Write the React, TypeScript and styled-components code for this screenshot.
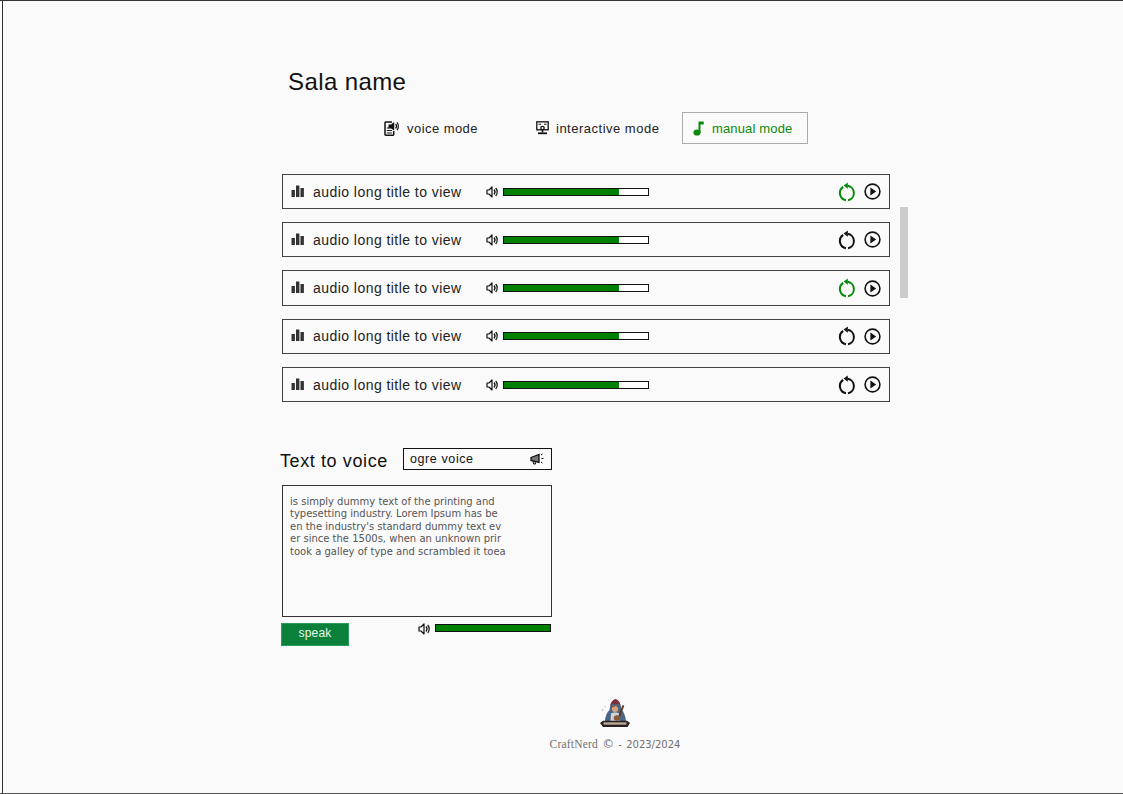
import React from "react";
import styled, { createGlobalStyle } from "styled-components";

const Global = createGlobalStyle`
  html, body { margin: 0; padding: 0; background: #fafafa; }
  * { box-sizing: border-box; }
`;
const deco = `"Liberation Sans", sans-serif`;

const Page = styled.div`
  width: 1123px; height: 794px; overflow: hidden; position: relative;
  background: #fafafa;
  border-top: 1px solid #333; border-bottom: 1px solid #555;
  padding-left: 3px;
  &::before { content: ""; position: absolute; left: 2px; top: 0; bottom: 0; width: 1px; background: #333; }
`;
const Main = styled.main`
  width: 608px; margin-left: 279px; padding-top: 64px;
`;
const Title = styled.h1`
  margin: 0 0 0 6px; height: 32px; font: 400 24px/34px ${deco}; letter-spacing: 0.4px; color: #111;
`;
const Tabs = styled.nav`
  display: flex; margin: 15px 0 0 91px; height: 32px;
`;
const Tab = styled.div<{ $w: number; $ls: number; $active?: boolean }>`
  width: ${p => p.$w}px; display: flex; align-items: center; padding-left: 10px;
  color: ${p => p.$active ? "#0a8a0a" : "#222"};
  border: 1px solid ${p => p.$active ? "#aaa" : "transparent"};
  font: 400 13px ${deco}; letter-spacing: ${p => p.$ls}px; white-space: nowrap;
`;
const TabIcon = styled.span<{ $w: number }>`
  width: ${p => p.$w}px; flex: none; display: flex; align-items: center;
`;
const List = styled.section`
  margin-top: 29.9px; display: flex; flex-direction: column; gap: 12.9px;
`;
const Row = styled.div`
  height: 35.35px; border: 1px solid #444; display: flex; align-items: center; padding: 0 8px;
`;
const RowTitle = styled.span`
  width: 173px; margin-left: 8px; font: 400 14px ${deco}; letter-spacing: 0.45px; color: #222; white-space: nowrap;
`;
const Bar = styled.div<{ $w: number }>`
  width: ${p => p.$w}px; height: 8px; margin-left: 5px; background: #fff; border: 1px solid #111; overflow: hidden;
`;
const Fill = styled.div`
  height: 100%; background: #008000;
`;
const Controls = styled.div`
  margin-left: auto; display: flex; align-items: center; gap: 8px;
`;
const Scroll = styled.div`
  position: absolute; left: 900px; top: 206px; width: 8px; height: 91px; background: #ccc;
`;
const Tts = styled.section`
  width: 270px; margin-top: 45.8px;
`;
const TtsHead = styled.div`
  display: flex; align-items: center; height: 23px; margin-left: -2px; gap: 16px;
`;
const TtsTitle = styled.h2`
  margin: 4px 0 0; width: 107px; font: 400 18px ${deco}; letter-spacing: 0.6px; color: #111; white-space: nowrap;
`;
const Select = styled.div`
  flex: none; width: 149px; height: 22px; border: 1px solid #111; display: flex; align-items: center; justify-content: space-between;
  padding: 0 6px; font: 400 12.5px ${deco}; letter-spacing: 0.6px; color: #111; background: #fafafa;
`;
const TextBox = styled.div`
  margin-top: 14px; height: 132px; border: 1px solid #333; padding: 10px 7px; font: 10px/12.4px "DejaVu Sans", sans-serif; color: #555;
`;
const Line = styled.div``;
const TtsFoot = styled.div`
  display: flex; justify-content: space-between; margin: 6px 0 0 -1px; width: 270px;
`;
const Speak = styled.button`
  width: 68px; height: 23px; border: 1px solid #2b9a5a; background: #0a803a; color: #e8f5ec; font: 400 12px ${deco}; letter-spacing: 0.2px; padding: 0 0 2px;
`;
const VolWrap = styled.div`
  display: flex; align-items: flex-start;
`;
const FootBar = styled(Bar)`
  margin: 1px 0 0 5px;
`;
const Footer = styled.footer`
  display: flex; flex-direction: column; align-items: center; margin: 52px 0 0; padding-left: 104px;
`;
const Copy = styled.div`
  margin-top: 8px; color: #707070; font: 10px "DejaVu Sans", sans-serif; white-space: nowrap; word-spacing: 1px;
`;
const Brand = styled.span`
  font: 11.5px "Liberation Serif", serif; letter-spacing: 0.2px;
`;
const Sym = styled.span`
  font-size: 12px;
`;

const Bars = () => <svg width="14" height="14" viewBox="0 0 14 14" fill="#333"><rect x="0.5" y="5" width="3.4" height="7"/><rect x="5" y="0.5" width="3.4" height="11.5"/><rect x="9.5" y="3" width="3.4" height="9"/></svg>;
const Vol = () => <svg width="12" height="12" viewBox="0 0 12 12" fill="none"><path d="M1 4h2l3-3v10L3 8H1z" fill="#fafafa" stroke="#111" strokeWidth="1.2" strokeLinejoin="round"/><path d="M8 3.5c1.2 1.4 1.2 3.6 0 5M9.7 2c2 2.2 2 5.8 0 8" stroke="#111" strokeWidth="1.2"/></svg>;
const Repeat = ({ c }: { c: string }) => <svg width="18" height="20" viewBox="0 0 18 20" fill="none"><path d="M5.2 4.9A7.3 7.3 0 0 0 8 18.2M10 18.2A7.3 7.3 0 0 0 9.5 3.8" stroke={c} strokeWidth="2"/><path d="M9.8 0.4v6.4L5.6 3.6z" fill={c}/></svg>;
const Play = () => <svg width="17" height="17" viewBox="0 0 17 17" fill="none"><circle cx="8.5" cy="8.5" r="7.4" stroke="#111" strokeWidth="1.6"/><path d="M6.4 4.6l5.8 3.9-5.8 3.9z" fill="#111"/></svg>;
const VoiceIc = () => <svg width="15" height="15" viewBox="0 0 15 15" fill="none"><path d="M8 1H1.700a.7.7 0 0 0-.7.7v11.800a.7.7 0 0 0 .7.7H9a.7.7 0 0 0 .7-.7V10" stroke="#111" strokeWidth="1.500"/><path d="M2.800 7h2.700M2.800 9.500h5M2.800 12h5" stroke="#111" strokeWidth="1.200"/><path d="M4.500 3.500h2.500l3.200-2.500v8.500L7 7.500H4.500z" fill="#111"/><path d="M11.600 3c1 1.200 1 3.300 0 4.500M13 1.400c1.800 2 1.800 5.700 0 7.700" stroke="#111" strokeWidth="1.200"/></svg>;
const InterIc = () => <svg width="13" height="14" viewBox="0 0 13 14" fill="none"><rect x="0.800" y="0.800" width="11.400" height="8" stroke="#111" strokeWidth="1.300"/><circle cx="6.500" cy="7" r="1.700" stroke="#111" strokeWidth="1.300"/><path d="M2.500 3.200h2.500M8 3.200h2.500" stroke="#111"/><path d="M2 11.400h9v1.800H2z" fill="#111"/><path d="M6.500 9v2.500" stroke="#111" strokeWidth="1.500"/></svg>;
const Note = () => <svg width="11" height="15" viewBox="0 0 11 15" fill="#0a8a0a"><ellipse cx="4" cy="11.500" rx="3.600" ry="3.100"/><path d="M5.500 0.500h5.200v3H7.500v8H5.500z"/></svg>;
const Mega = () => <svg width="15" height="12" viewBox="0 0 15 12" fill="none"><path d="M1 4.500L9 1.500V9.500L1 7.500z" stroke="#111" strokeWidth="1.300" fill="#777"/><path d="M3 8l.6 3h2L5 8.500" stroke="#111"/><path d="M11 2l1.500-1M11.500 5.500h2M11 9l1.500 1" stroke="#111"/></svg>;
const Logo = () => (
  <svg width="32" height="31" viewBox="0 0 32 31">
    <path d="M6 23c.5-6 2.500-9 4.500-11 .5-5 2.500-9.500 6-10.500 3.500 1 5.500 5 6 10 2 2 4 6 4.500 11.500z" fill="#4a6684"/>
    <path d="M11 8c.8-4 3-6.500 5.500-7 2.500.5 4.500 3 5 6.500-2-2.500-8-2.500-10.500.5z" fill="#7e2e3c"/>
    <ellipse cx="16" cy="10.500" rx="3.200" ry="3.600" fill="#d9a27e"/>
    <path d="M12.500 10c.3-3.500 6.500-4 7 0-1.500-1.500-2-1.800-3.500-1.700-1.400.1-2.300.7-3.500 1.700z" fill="#5d3320"/>
    <path d="M12 15.500c2-1.200 6-1.200 8 0l.5 7.500h-9z" fill="#cdd4da"/>
    <path d="M23.500 7l1.800.7-4.500 12-1.800-.7z" fill="#5f3a20"/>
    <ellipse cx="18" cy="20" rx="3.300" ry="2.700" fill="#8b5a30"/>
    <path d="M1 25l3-2.300h24l3 2.300-2.500 4H4z" fill="#2a1f22"/>
    <path d="M4.500 24.300h23v2.400h-23z" fill="#b8a896"/>
    <circle cx="3.500" cy="12" r=".8" fill="#aaa"/><circle cx="6" cy="8.500" r=".7" fill="#bbb"/>
  </svg>
);

const rows = [true, false, true, false, false];
const lines = ["is simply dummy text of the printing and", "typesetting industry. Lorem Ipsum has be", "en the industry's standard dummy text ev", "er since the 1500s, when an unknown prir", "took a galley of type and scrambled it toea"];

export default function App() {
  return (
    <Page>
      <Global />
      <Main>
        <Title>Sala name</Title>
        <Tabs>
          <Tab $w={152} $ls={0.45}><TabIcon $w={23}><VoiceIc /></TabIcon>voice mode</Tab>
          <Tab $w={157} $ls={0.5}><TabIcon $w={20}><InterIc /></TabIcon>interactive mode</Tab>
          <Tab $w={126} $ls={0.15} $active><TabIcon $w={19}><Note /></TabIcon>manual mode</Tab>
        </Tabs>
        <List>
          {rows.map((on, i) => (
            <Row key={i}>
              <Bars />
              <RowTitle>audio long title to view</RowTitle>
              <Vol />
              <Bar $w={146}><Fill style={{ width: "80%" }} /></Bar>
              <Controls><Repeat c={on ? "#0a8a0a" : "#111"} /><Play /></Controls>
            </Row>
          ))}
        </List>
        <Tts>
          <TtsHead>
            <TtsTitle>Text to voice</TtsTitle>
            <Select>ogre voice<Mega /></Select>
          </TtsHead>
          <TextBox>{lines.map(l => <Line key={l}>{l}</Line>)}</TextBox>
          <TtsFoot>
            <Speak>speak</Speak>
            <VolWrap><Vol /><FootBar $w={116}><Fill /></FootBar></VolWrap>
          </TtsFoot>
        </Tts>
      </Main>
      <Footer>
        <Logo />
        <Copy><Brand>CraftNerd</Brand> <Sym>©</Sym> - 2023/2024</Copy>
      </Footer>
      <Scroll />
    </Page>
  );
}
